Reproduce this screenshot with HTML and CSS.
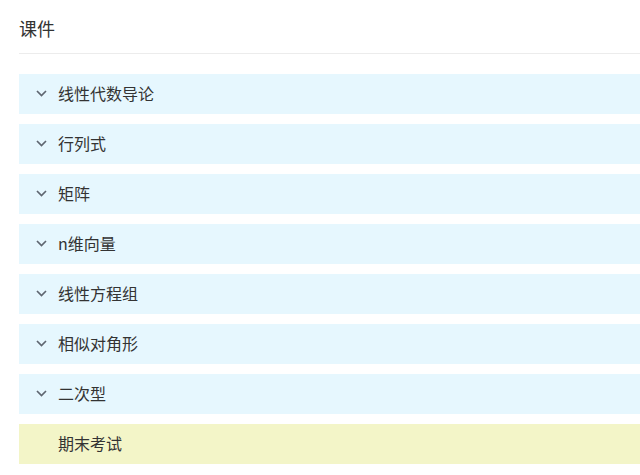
FILE: index.html
```html
<!DOCTYPE html>
<html lang="zh-CN">
    <head>
        <meta charset="utf-8">
        <title> 课件 </title>
        <link rel="stylesheet" href="styles.css">
    </head>
    <body>
        <div class='courseware'>
            <div class='header'> 课件 </div>

            <div class='chapters'>
                <div class='chapter'>
                    <svg class='arrow' viewBox='0 0 11 7'><path d='M1 1 L5.5 5.5 L10 1'/></svg>
                    <span>线性代数导论</span>
                </div>
                <div class='chapter'>
                    <svg class='arrow' viewBox='0 0 11 7'><path d='M1 1 L5.5 5.5 L10 1'/></svg>
                    <span>行列式</span>
                </div>
                <div class='chapter'>
                    <svg class='arrow' viewBox='0 0 11 7'><path d='M1 1 L5.5 5.5 L10 1'/></svg>
                    <span>矩阵</span>
                </div>
                <div class='chapter'>
                    <svg class='arrow' viewBox='0 0 11 7'><path d='M1 1 L5.5 5.5 L10 1'/></svg>
                    <span>n维向量</span>
                </div>
                <div class='chapter'>
                    <svg class='arrow' viewBox='0 0 11 7'><path d='M1 1 L5.5 5.5 L10 1'/></svg>
                    <span>线性方程组</span>
                </div>
                <div class='chapter'>
                    <svg class='arrow' viewBox='0 0 11 7'><path d='M1 1 L5.5 5.5 L10 1'/></svg>
                    <span>相似对角形</span>
                </div>
                <div class='chapter'>
                    <svg class='arrow' viewBox='0 0 11 7'><path d='M1 1 L5.5 5.5 L10 1'/></svg>
                    <span>二次型</span>
                </div>
                <div class='chapter exam'>
                    <span>期末考试</span>
                </div>
            </div>
        </div>
    </body>
</html>
```

FILE: styles.css
```css
body
{
    margin:           0px;
    background-color: #ffffff;
    font-family:      "Noto Sans CJK SC", "Noto Sans", sans-serif;
    color:            #333333;
}

.courseware
{
    padding-left:     19px;
}

.header
{
    padding-top:      16px;
    padding-bottom:   13px;
    line-height:      24px;
    font-size:        18px;
    border-bottom:    1px solid #ececec;
}

.chapters
{
    display:          flex;
    flex-direction:   column;
    gap:              10px;
    margin-top:       20px;
}

.chapter
{
    display:          flex;
    align-items:      center;
    height:           40px;
    padding-left:     17px;
    background-color: #e6f7fe;
    font-size:        16px;
    line-height:      20px;
    color:            #333333;
}

.chapter span
{
    padding-bottom:   3px;
}

.arrow
{
    width:            11px;
    height:           7px;
    margin-right:     11px;
    margin-bottom:    1px;
    fill:             none;
    stroke:           #5f6670;
    stroke-width:     1.7;
}

.exam
{
    padding-left:     39px;
    background-color: #f3f5c8;
}
```
